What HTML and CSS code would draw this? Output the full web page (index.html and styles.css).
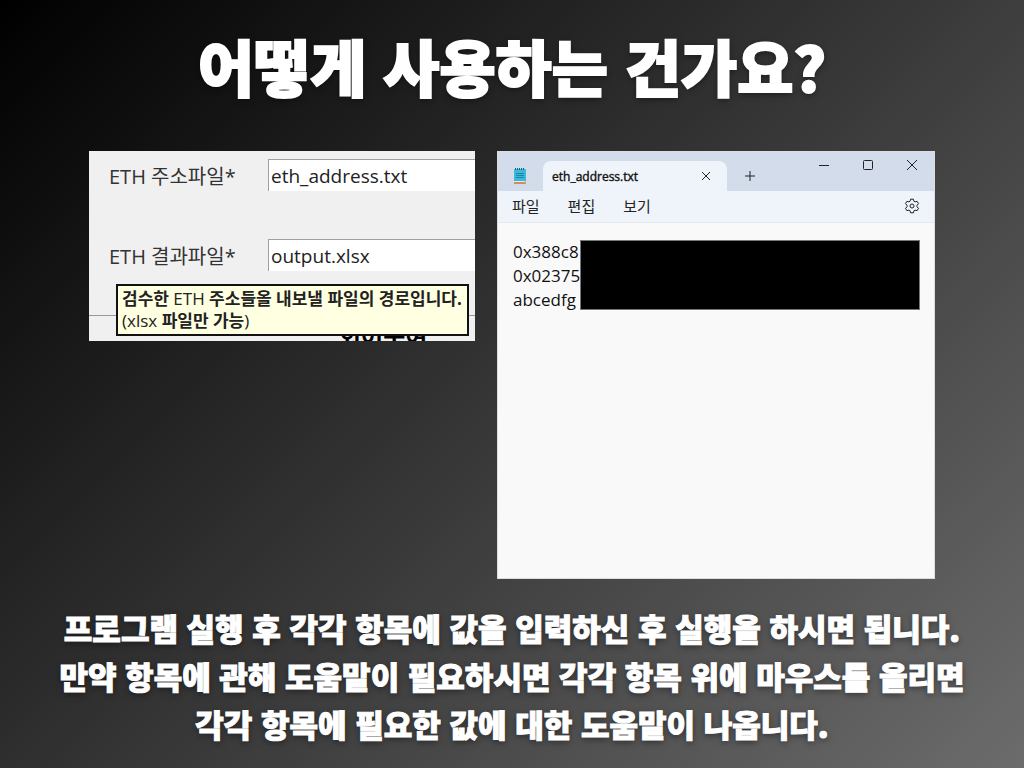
FILE: index.html
```html
<!DOCTYPE html>
<html lang="ko">
<head>
  <meta charset="UTF-8">
  <meta name="viewport" content="width=device-width, initial-scale=1.0">
  <title>어떻게 사용하는 건가요?</title>
  <link rel="stylesheet" href="styles.css">
</head>
<body>
  <h1>어떻게 사용하는 건가요?</h1>

  <main class="examples">
    <!-- 입력 폼 -->
    <form class="form-panel">
      <div class="field">
        <label for="ethAddress">ETH 주소파일*</label>
        <input type="text" id="ethAddress" value="eth_address.txt">
      </div>
      <div class="field">
        <label for="ethResult">ETH 결과파일*</label>
        <input type="text" id="ethResult" value="output.xlsx">
      </div>
      <div class="form-footer">회어구여</div>
      <div class="tooltip" role="tooltip"><b>검수한</b> ETH <b>주소들올 내보낼 파일의 경로입니다.</b><br>(xlsx <b>파일만 가능</b>)</div>
    </form>

    <!-- 메모장 -->
    <section class="notepad">
      <header class="titlebar">
        <svg class="app-icon" width="14" height="18" viewBox="0 0 14 18">
          <path d="M1 15h11l1 1v1H1z" fill="#d98a55"/>
          <rect x="1" y="2" width="12" height="13" rx="1" fill="#3db8d8"/>
          <path d="M1 14h11v1H1z" fill="#d5eef7"/>
          <path class="rings" d="M2.500 1v2M4.500 1v2M6.500 1v2M8.500 1v2M10.500 1v2"/>
          <path class="lines" d="M3 6.500h8M3 8.500h8M3 10.500h8"/>
        </svg>
        <div class="tab">
          <span>eth_address.txt</span>
          <button type="button" aria-label="탭 닫기">
            <svg width="10" height="10" viewBox="0 0 10 10"><path d="M1 1l8 8M9 1L1 9"/></svg>
          </button>
        </div>
        <button type="button" class="new-tab" aria-label="새 탭">
          <svg width="10" height="10" viewBox="0 0 10 10"><path d="M5 0v10M0 5h10"/></svg>
        </button>
        <div class="window-buttons">
          <button type="button" aria-label="최소화">
            <svg width="12" height="12" viewBox="0 0 12 12"><path d="M1 6.500h10"/></svg>
          </button>
          <button type="button" aria-label="최대화">
            <svg width="12" height="12" viewBox="0 0 12 12"><rect x="1.500" y="1.500" width="9" height="9" rx="1"/></svg>
          </button>
          <button type="button" aria-label="닫기">
            <svg width="12" height="12" viewBox="0 0 12 12"><path d="M1 1l10 10M11 1L1 11"/></svg>
          </button>
        </div>
      </header>
      <nav class="menu">
        <button type="button">파일</button>
        <button type="button">편집</button>
        <button type="button">보기</button>
        <button type="button" class="settings" aria-label="설정">
          <svg width="16" height="16" viewBox="0 0 16 16">
            <path d="M6.600 1.200h2.800l.5 2 1.200.7 2-.6 1.400 2.400-1.500 1.500v1.600l1.500 1.500-1.400 2.400-2-.6-1.200.7-.5 2H6.600l-.5-2-1.200-.7-2 .6-1.400-2.400L3 8.800V7.200L1.500 5.700l1.400-2.400 2 .6 1.200-.7z"/>
            <circle cx="8" cy="8" r="2"/>
          </svg>
        </button>
      </nav>
      <div class="document">
        <p>0x388c8<br>0x02375<br>abcedfg</p>
        <div class="redacted"></div>
      </div>
    </section>
  </main>

  <p class="description">
    프로그램 실행 후 각각 항목에 값을 입력하신 후 실행을 하시면 됩니다.<br>
    만약 항목에 관해 도움말이 필요하시면 각각 항목 위에 마우스를 올리면<br>
    각각 항목에 필요한 값에 대한 도움말이 나옵니다.
  </p>
</body>
</html>
```
FILE: styles.css
```css
* {
  margin: 0;
  padding: 0;
  box-sizing: border-box;
}

body {
  min-height: 100vh;
  padding-top: 20px;
  background: linear-gradient(135deg, #000000, #6c6c6c);
  font-family: 'Open Sans', 'Noto Sans CJK KR', sans-serif;
  overflow-x: hidden;
}

h1,
.description {
  color: #fff;
  font-family: 'Noto Sans CJK KR', sans-serif;
  font-weight: 900;
  text-align: center;
  text-shadow: 0 2px 6px rgba(0, 0, 0, 0.5);
}

h1 {
  font-size: 61px;
  line-height: 92px;
  -webkit-text-stroke: 2px #fff;
}

.examples {
  display: grid;
  grid-template-columns: 386fr 438fr;
  align-items: start;
  gap: 22px;
  padding: 0 89px;
  margin-top: 39px;
}

button {
  border: none;
  background: none;
  color: #222;
  font: inherit;
  cursor: pointer;
}

svg {
  display: block;
  fill: none;
  stroke: #222;
}

/* 입력 폼 */
.form-panel {
  position: relative;
  height: 190px;
  padding-top: 8px;
  background-color: #f0f0f0;
  overflow: hidden;
}

.field {
  display: flex;
  align-items: center;
  height: 32px;
  margin-bottom: 48px;
  padding-left: 20px;
  color: #333;
  font-size: 19px;
}

.field label {
  flex: none;
  width: 159px;
  font-size: 20px;
}

.field input {
  flex: 1;
  min-width: 0;
  height: 32px;
  padding: 0 2px;
  border: 1px solid #a0a0a0;
  border-width: 1px 0 0 1px;
  background-color: #fff;
  color: #222;
  font: inherit;
  outline: none;
}

.form-footer {
  height: 26px;
  margin-top: -4px;
  padding-left: 250px;
  border-top: 1px solid #999;
  color: #000;
  font-size: 24px;
  font-weight: 700;
  line-height: 40px;
}

.tooltip {
  position: absolute;
  top: 133px;
  left: 27px;
  right: 6px;
  padding: 2px 4px;
  border: 2px solid #111;
  background-color: #ffffe1;
  color: #222;
  font-size: 17px;
  line-height: 22px;
  white-space: nowrap;
}

/* 메모장 */
.notepad {
  min-height: 428px;
  border: 1px solid #ddd;
  background-color: #f9f9f9;
  color: #111;
}

.titlebar {
  display: flex;
  align-items: flex-end;
  height: 39px;
  padding-left: 15px;
  background-color: #d2dceb;
}

.app-icon {
  margin-bottom: 6px;
  stroke: none;
}

.app-icon .rings {
  stroke: #15677f;
}

.app-icon .lines {
  stroke: #1787a8;
}

.tab {
  display: flex;
  align-items: center;
  justify-content: space-between;
  width: 184px;
  height: 30px;
  margin-left: 16px;
  padding: 0 16px 0 9px;
  border-radius: 8px 8px 0 0;
  background-color: #eff4fa;
  font-size: 12px;
  -webkit-text-stroke: 0.4px #111;
}

.new-tab {
  padding: 10px 18px;
}

.window-buttons {
  display: flex;
  align-self: flex-start;
  gap: 32px;
  margin-left: auto;
  padding: 7px 16px 0 0;
}

.menu {
  display: flex;
  align-items: center;
  gap: 28px;
  height: 32px;
  padding: 0 14px;
  border-bottom: 1px solid #e6e9ed;
  background-color: #eff4fa;
  font-size: 15px;
  line-height: 20px;
}

.menu button {
  padding-bottom: 2px;
}

.settings {
  margin-left: auto;
}

.document {
  display: flex;
  padding: 17px 14px 0 15px;
  font-size: 17px;
  line-height: 24px;
}

.document p {
  width: 67px;
  white-space: nowrap;
}

.redacted {
  flex: 1;
  height: 70px;
  border: 1px solid #777;
  background-color: #000;
}

.description {
  margin-top: 25px;
  font-size: 31px;
  line-height: 48px;
  white-space: nowrap;
  -webkit-text-stroke: 1px #fff;
}
```
